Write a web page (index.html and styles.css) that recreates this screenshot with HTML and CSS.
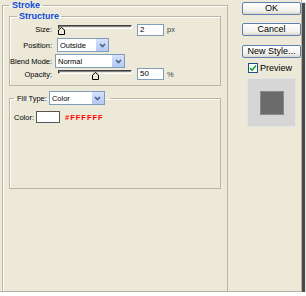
FILE: index.html
```html
<!DOCTYPE html>
<html lang="en">
<head>
<meta charset="UTF-8">
<title>Layer Style - Stroke</title>
<link rel="stylesheet" href="styles.css">
</head>
<body>

<div class="dialog">
    <fieldset class="group stroke">
        <legend class="title">Stroke</legend>

        <fieldset class="group structure">
            <legend class="title sub">Structure</legend>

            <div class="row">
                <span class="label">Size:</span>
                <div class="slider">
                    <div class="track"></div>
                    <svg class="thumb" style="left:0px" width="7" height="8" viewBox="0 0 7 8"><path d="M0.5 7.5V3L3.5 0.5L6.5 3V7.5Z" fill="#ECE9D8" stroke="#000"/></svg>
                </div>
                <div class="field">2</div>
                <span class="unit">px</span>
            </div>

            <div class="row row-sel">
                <span class="label">Position:</span>
                <div class="select sel-position">
                    <span class="value">Outside</span>
                    <span class="drop"><svg width="7" height="5" viewBox="0 0 7 5"><path d="M1 1L3.5 3.5L6 1" fill="none" stroke="#4D6185" stroke-width="1.6"/></svg></span>
                </div>
            </div>

            <div class="row row-sel">
                <span class="label">Blend Mode:</span>
                <div class="select sel-blend">
                    <span class="value">Normal</span>
                    <span class="drop"><svg width="7" height="5" viewBox="0 0 7 5"><path d="M1 1L3.5 3.5L6 1" fill="none" stroke="#4D6185" stroke-width="1.6"/></svg></span>
                </div>
            </div>

            <div class="row row-last">
                <span class="label">Opacity:</span>
                <div class="slider">
                    <div class="track"></div>
                    <svg class="thumb" style="left:34px" width="7" height="8" viewBox="0 0 7 8"><path d="M0.5 7.5V3L3.5 0.5L6.5 3V7.5Z" fill="#ECE9D8" stroke="#000"/></svg>
                </div>
                <div class="field">50</div>
                <span class="unit">%</span>
            </div>
        </fieldset>

        <fieldset class="group fill">
            <legend class="fill-legend">
                <span class="fill-label">Fill Type:</span>
                <div class="select sel-fill">
                    <span class="value">Color</span>
                    <span class="drop"><svg width="7" height="5" viewBox="0 0 7 5"><path d="M1 1L3.5 3.5L6 1" fill="none" stroke="#4D6185" stroke-width="1.6"/></svg></span>
                </div>
            </legend>

            <div class="color-row">
                <span class="label-color">Color:</span>
                <div class="swatch"></div>
                <span class="hex">#FFFFFF</span>
            </div>
        </fieldset>
    </fieldset>

    <div class="side">
        <button class="btn btn-ok">OK</button>
        <button class="btn btn-cancel">Cancel</button>
        <button class="btn">New Style...</button>
        <div class="check">
            <span class="box"><svg width="8" height="8" viewBox="0 0 8 8"><path d="M1 4L3 6.2L7 1.5" fill="none" stroke="#21A121" stroke-width="1.6"/></svg></span>
            <span>Preview</span>
        </div>
        <div class="preview">
            <div class="sample"></div>
        </div>
    </div>
</div>

</body>
</html>
```

FILE: styles.css
```css
body {
    margin: 0;
    background-color: #fff;
    font-family: "Liberation Sans", Arial, sans-serif;
    font-size: 7.5px;
    color: #000;
}
.dialog {
    display: flex;
    width: 301px;
    height: 291px;
    background-color: #ECE9D8;
    border-right: 1px solid #B5B2A2;
    border-bottom: 1px solid #B5B2A2;
    box-shadow: 3px 3px 1px #4a4a4a;
}

/* group boxes */
.group {
    margin: 0;
    padding: 0;
    min-width: 0;
    border: 1px solid #B9B6A5;
    box-shadow: inset 1px 1px 0 #fff;
}
.title {
    margin-left: 0;
    padding: 0 3px;
    line-height: 10px;
    font-size: 9px;
    font-weight: bold;
    color: #0A48D6;
}
.stroke {
    box-sizing: border-box;
    width: 226px;
    margin-left: 2px;
    padding: 0 6px;
    border-bottom: none;
}
.structure {
    margin-top: 1px;
    padding: 2px 0 5px 0;
}
.sub {
    margin-left: 7px;
    padding: 0 2px;
}

/* rows */
.row {
    display: flex;
    align-items: center;
    height: 13px;
}
.row-sel {
    height: 14px;
    margin-top: 2px;
}
.row-last {
    height: 12px;
    margin-top: 0;
}
.label {
    width: 42px;
    text-align: right;
    white-space: nowrap;
}
.slider {
    position: relative;
    width: 74px;
    height: 9px;
    margin-left: 6px;
}
.track {
    box-sizing: border-box;
    width: 100%;
    height: 4px;
    border: 1px solid #404040;
    border-right-color: #fff;
    border-bottom-color: #fff;
    background-color: #ECE9D8;
    box-shadow: inset 1px 1px 0 #808080;
}
.thumb {
    position: absolute;
    top: 2px;
}
.field {
    box-sizing: border-box;
    width: 27px;
    height: 12px;
    margin-left: 5px;
    padding-left: 2px;
    line-height: 10px;
    font-size: 8px;
    background-color: #fff;
    border: 1px solid #7F9DB9;
}
.unit {
    margin-left: 3px;
    color: #444;
}

/* dropdowns */
.select {
    box-sizing: border-box;
    display: flex;
    align-items: center;
    height: 14px;
    background-color: #fff;
    border: 1px solid #7F9DB9;
}
.select .value {
    flex: 1;
    padding-left: 2px;
    white-space: nowrap;
}
.drop {
    display: flex;
    align-items: center;
    justify-content: center;
    width: 12px;
    height: 12px;
    background: linear-gradient(#D6E1FB, #B5C8F5);
    border-left: 1px solid #fff;
}
.sel-position {
    width: 52px;
    margin-left: 5px;
}
.sel-blend {
    width: 70px;
    margin-left: 3px;
}
.sel-fill {
    width: 56px;
    margin-left: 2px;
}

/* fill type */
.fill {
    margin-top: 5px;
    padding: 0 0 65px 0;
}
.fill-legend {
    display: flex;
    align-items: center;
    height: 14px;
    margin-left: 4px;
    padding: 0 5px 0 3px;
}
.fill-label {
    white-space: nowrap;
}
.color-row {
    display: flex;
    align-items: center;
    height: 12px;
    margin-top: 6px;
    padding-left: 4px;
}
.swatch {
    box-sizing: border-box;
    width: 24px;
    height: 12px;
    margin-left: 2px;
    background-color: #fff;
    border: 1px solid #555;
}
.hex {
    margin-left: 5px;
    font-weight: bold;
    font-size: 7.5px;
    letter-spacing: 1px;
    color: #F00;
}

/* right column */
.side {
    width: 59px;
    margin-left: 14px;
    padding-top: 2px;
}
.btn {
    display: block;
    box-sizing: border-box;
    width: 59px;
    height: 13px;
    margin: 0;
    padding: 0;
    font-family: "Liberation Sans", Arial, sans-serif;
    font-size: 9px;
    line-height: 11px;
    color: #000;
    background: linear-gradient(#FFFFFF, #F2F1EC 70%, #DCD8CC);
    border: 1px solid #5F7FB0;
    border-radius: 2px;
}
.btn-ok {
    margin-bottom: 8px;
}
.btn-cancel {
    margin-bottom: 9px;
}
.check {
    display: flex;
    align-items: center;
    height: 10px;
    margin-top: 5px;
    margin-left: 6px;
    font-size: 9px;
}
.box {
    box-sizing: border-box;
    display: flex;
    align-items: center;
    justify-content: center;
    width: 10px;
    height: 10px;
    margin-right: 2px;
    background-color: #fff;
    border: 1px solid #1C5180;
}
.preview {
    box-sizing: border-box;
    display: flex;
    align-items: center;
    justify-content: center;
    width: 49px;
    height: 49px;
    margin-top: 5px;
    margin-left: 5px;
    background-color: #D6D6D6;
    border: 1px solid #E4E4E4;
}
.sample {
    box-sizing: border-box;
    width: 24px;
    height: 24px;
    background-color: #6B6B6B;
    border: 1px solid #8A8A8A;
}
```
